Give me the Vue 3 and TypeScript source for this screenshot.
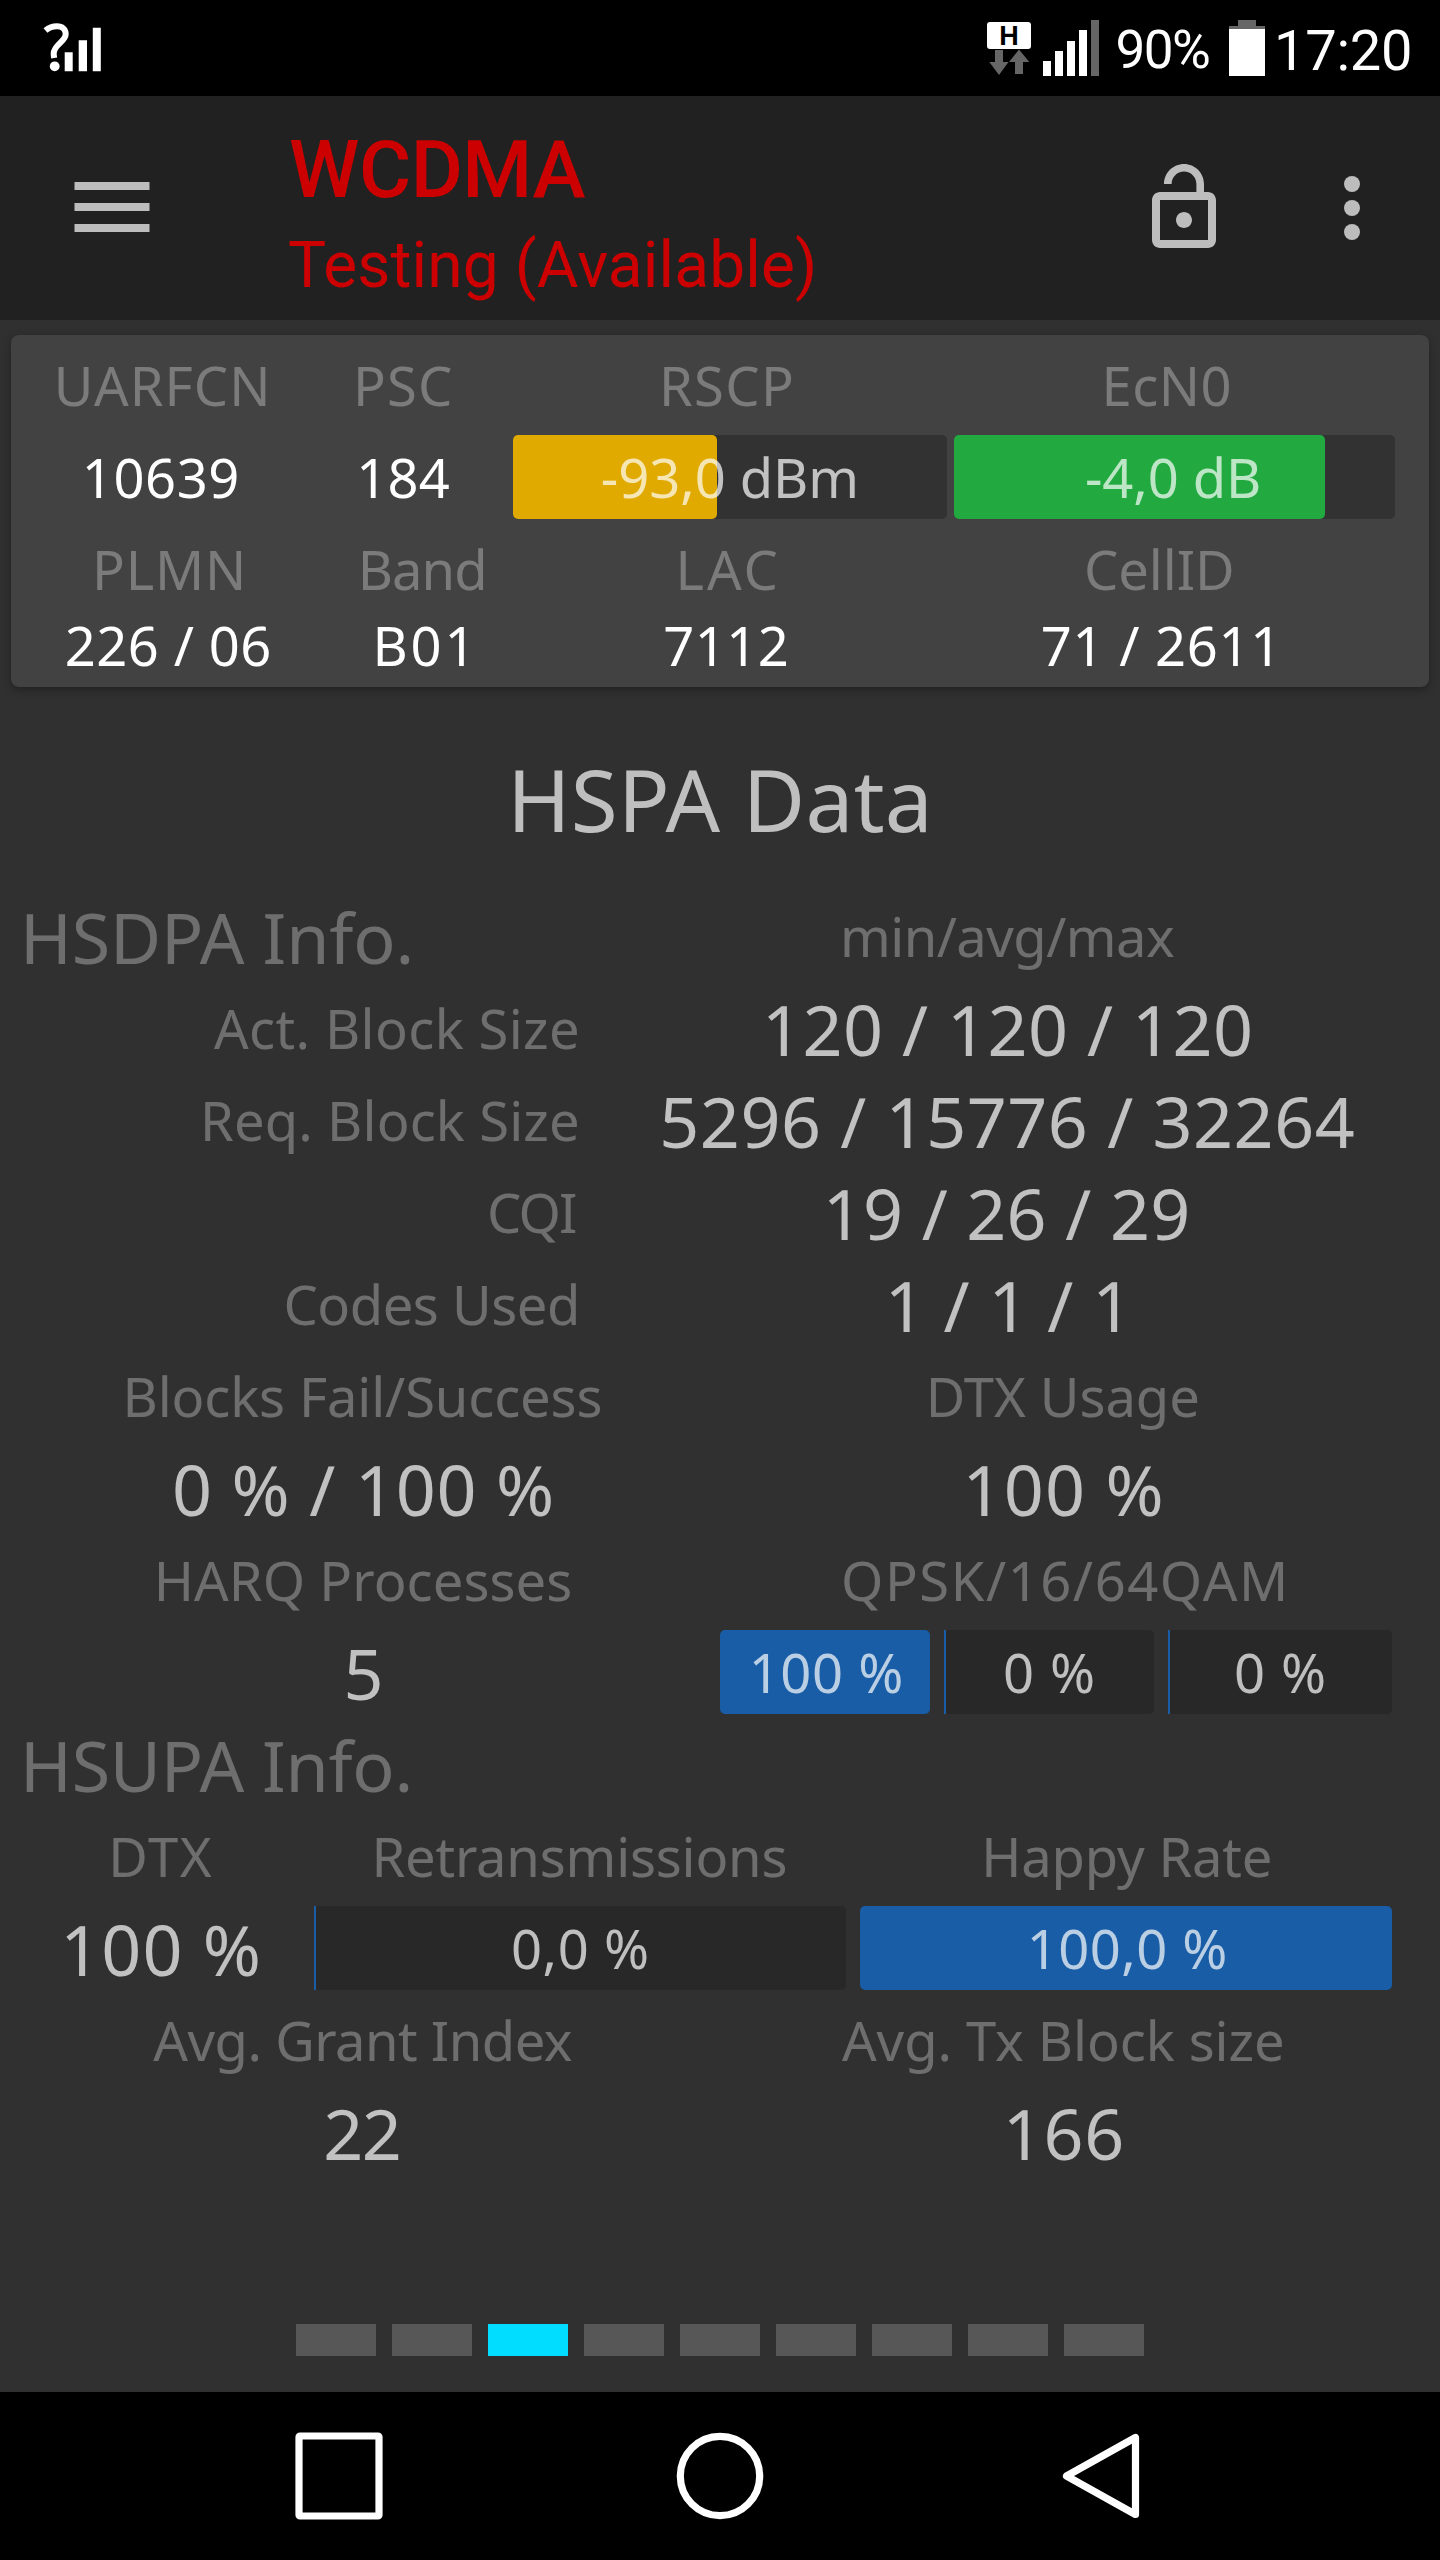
<script setup lang="ts">
import type { Directive } from 'vue'

interface Cell {
  text: string
  w: number
  ink: number
  kind?: 'label' | 'value' | 'big' | 'white'
  bar?: 'yellow' | 'green' | 'blue'
  fill?: number
  gap?: number
  dx?: number
  align?: 'start' | 'end'
  edge?: number
}

// Tracks the text out to the given ink width and trims the side bearings,
// so that each cell centres the visible glyphs.
const vFit: Directive<HTMLElement, number> = {
  mounted(el, { value }) {
    const ctx = document.createElement('canvas').getContext('2d')
    const text = el.textContent ?? ''
    if (!ctx || !text) return
    const s = getComputedStyle(el)
    ctx.font = `${s.fontWeight} ${s.fontSize} ${s.fontFamily}`
    const m = ctx.measureText(text)
    const ink = m.actualBoundingBoxLeft + m.actualBoundingBoxRight
    const spacing = text.length > 1 ? (value - ink) / (text.length - 1) : 0
    el.style.letterSpacing = `${spacing}px`
    el.style.marginLeft = `${m.actualBoundingBoxLeft}px`
    el.style.marginRight = `${m.actualBoundingBoxRight - m.width - spacing}px`
  },
}

function cellStyle(c: Cell) {
  const dx = c.dx ?? 0
  return {
    width: `${c.w}px`,
    marginLeft: `${c.gap ?? 0}px`,
    paddingLeft: `${c.align === 'start' ? c.edge : Math.max(0, dx * 2)}px`,
    paddingRight: `${c.align === 'end' ? c.edge : Math.max(0, -dx * 2)}px`,
    justifyContent: c.align ? `flex-${c.align}` : 'center',
  }
}

const cardRows: { h: number; pad: number; cells: Cell[] }[] = [
  { h: 99, pad: 12, cells: [
    { text: 'UARFCN', w: 277, ink: 207.5 },
    { text: 'PSC', w: 209, ink: 93 },
    { text: 'RSCP', w: 438, ink: 128 },
    { text: 'EcN0', w: 442, ink: 123 },
  ] },
  { h: 86, pad: 12, cells: [
    { text: '10639', w: 277, ink: 151.5, kind: 'white' },
    { text: '184', w: 209, ink: 88.5, kind: 'white' },
    { text: '-93,0 dBm', w: 434, ink: 252.5, bar: 'yellow', fill: 204, gap: 4, dx: -1 },
    { text: '-4,0 dB', w: 441, ink: 172, bar: 'green', fill: 371, gap: 7, dx: -1.5 },
  ] },
  { h: 97, pad: 0, cells: [
    { text: 'PLMN', w: 316, ink: 144 },
    { text: 'Band', w: 192, ink: 120.5 },
    { text: 'LAC', w: 419, ink: 96 },
    { text: 'CellID', w: 443, ink: 145 },
  ] },
  { h: 55, pad: 0, cells: [
    { text: '226 / 06', w: 314, ink: 202.5, kind: 'white' },
    { text: 'B01', w: 192, ink: 87, kind: 'white' },
    { text: '7112', w: 418, ink: 121.5, kind: 'white' },
    { text: '71 / 2611', w: 443, ink: 227.5, kind: 'white' },
  ] },
]

const dataRows: Cell[][] = [
  [
    { text: 'HSDPA Info.', w: 600, ink: 383.5, kind: 'big', align: 'start', edge: 26 },
    { text: 'min/avg/max', w: 818, ink: 330 },
  ],
  [
    { text: 'Act. Block Size', w: 600, ink: 363, align: 'end', edge: 23 },
    { text: '120 / 120 / 120', w: 818, ink: 482, kind: 'value' },
  ],
  [
    { text: 'Req. Block Size', w: 600, ink: 372, align: 'end', edge: 23 },
    { text: '5296 / 15776 / 32264', w: 817, ink: 690.5, kind: 'value' },
  ],
  [
    { text: 'CQI', w: 600, ink: 86, align: 'end', edge: 24 },
    { text: '19 / 26 / 29', w: 816, ink: 358.5, kind: 'value' },
  ],
  [
    { text: 'Codes Used', w: 600, ink: 289.5, align: 'end', edge: 24 },
    { text: '1 / 1 / 1', w: 808, ink: 226.5, kind: 'value' },
  ],
  [
    { text: 'Blocks Fail/Success', w: 728, ink: 473 },
    { text: 'DTX Usage', w: 672, ink: 266.5 },
  ],
  [
    { text: '0 % / 100 %', w: 726, ink: 376, kind: 'value' },
    { text: '100 %', w: 677, ink: 192, kind: 'value' },
  ],
  [
    { text: 'HARQ Processes', w: 729, ink: 411.5 },
    { text: 'QPSK/16/64QAM', w: 669, ink: 439 },
  ],
  [
    { text: '5', w: 720, ink: 31, kind: 'value', dx: 4 },
    { text: '100 %', w: 210, ink: 148.5, bar: 'blue', fill: 210, dx: 2 },
    { text: '0 %', w: 210, ink: 88, bar: 'blue', fill: 2, gap: 14 },
    { text: '0 %', w: 224, ink: 88, bar: 'blue', fill: 2, gap: 14 },
  ],
  [{ text: 'HSUPA Info.', w: 600, ink: 382.5, kind: 'big', align: 'start', edge: 26 }],
  [
    { text: 'DTX', w: 325, ink: 98.5 },
    { text: 'Retransmissions', w: 512, ink: 409 },
    { text: 'Happy Rate', w: 582, ink: 283.5 },
  ],
  [
    { text: '100 %', w: 314, ink: 191.5, kind: 'value', dx: 5 },
    { text: '0,0 %', w: 532, ink: 134, bar: 'blue', fill: 2 },
    { text: '100,0 %', w: 532, ink: 194.5, bar: 'blue', fill: 532, gap: 14, dx: 2 },
  ],
  [
    { text: 'Avg. Grant Index', w: 725, ink: 418.5 },
    { text: 'Avg. Tx Block size', w: 674, ink: 440 },
  ],
  [
    { text: '22', w: 725, ink: 72.5, kind: 'value' },
    { text: '166', w: 680, ink: 112.5, kind: 'value' },
  ],
]

const pages = 9
const activePage = 3
</script>

<template>
  <div class="screen">
    <header class="status">
      <svg class="unknown" width="60" height="52" viewBox="42 22 60 52">
        <path d="M45.5 30.5C49 27.5 53 26.3 57 26.3c5.300 0 8.700 3 8.700 7.700 0 8-12 10.500-12 19.500 0 1.500.2 3 .5 4.500" fill="none" stroke="#fff" stroke-width="6" />
        <circle cx="54.700" cy="66.300" r="4.900" fill="#fff" />
        <path d="M64.700 52.300h8V71.300h-8zM78.700 40.300h8.300V71.300h-8.300zM92.800 27.700h8V71.300h-8z" fill="#fff" />
      </svg>
      <div class="status-right">
        <svg width="112" height="56" viewBox="987 20 112 56">
          <rect x="987" y="22" width="44" height="27" rx="3" fill="#fff" />
          <text x="1009" y="45" class="net">H</text>
          <path d="M995 50h8v12h5.500L999 75l-9.700-13H995zM1019 49.500l10.300 12.500H1023v12h-8V62h-6z" fill="#666" />
          <path d="M1043 61h8v15h-8zM1055 51h8v25h-8zM1067 41h8v35h-8zM1079 30h8v46h-8z" fill="#fff" />
          <path d="M1091 20h8v56h-8z" fill="#666" />
        </svg>
        <span class="percent"><span v-fit="91.5">90%</span></span>
        <svg class="battery" width="36" height="56" viewBox="0 0 36 56">
          <path d="M9 0h18v6h9v3H0V6h9z" fill="#666" />
          <path d="M0 9h36v47H0z" fill="#fff" />
        </svg>
        <span class="clock"><span v-fit="132">17:20</span></span>
      </div>
    </header>

    <div class="appbar">
      <svg class="menu" width="76" height="50" viewBox="0 0 76 50">
        <path d="M.5 0h75v8H.5zM.5 21h75v8H.5zM.5 42h75v8H.5z" fill="#bdbdbd" />
      </svg>
      <div class="titles">
        <div class="title"><span v-fit="295.5">WCDMA</span></div>
        <div class="subtitle"><span v-fit="524">Testing (Available)</span></div>
      </div>
      <svg class="lock" width="96" height="96" viewBox="0 0 24 24">
        <path fill="#bdbdbd" d="M12 17c1.100 0 2-.9 2-2s-.9-2-2-2-2 .9-2 2 .9 2 2 2zm6-9h-1V6c0-2.760-2.240-5-5-5S7 3.240 7 6h1.900c0-1.710 1.390-3.100 3.100-3.100 1.710 0 3.100 1.390 3.100 3.100v2H6c-1.100 0-2 .9-2 2v10c0 1.100.9 2 2 2h12c1.100 0 2-.9 2-2V10c0-1.100-.9-2-2-2zm0 12H6V10h12v10z" />
      </svg>
      <svg class="more" width="16" height="64" viewBox="0 0 16 64">
        <g fill="#bdbdbd"><circle cx="8" cy="8" r="8" /><circle cx="8" cy="32" r="8" /><circle cx="8" cy="56" r="8" /></g>
      </svg>
    </div>

    <section class="card">
      <div v-for="(row, r) in cardRows" :key="r" class="row" :style="{ height: row.h + 'px', paddingLeft: row.pad + 'px' }">
        <div v-for="(c, i) in row.cells" :key="i" class="cell" :class="[c.bar ? 'bar' : c.kind ?? 'label', c.bar]" :style="cellStyle(c)">
          <i v-if="c.bar" class="fill" :style="{ width: c.fill + 'px' }"></i>
          <span v-fit="c.ink" class="txt">{{ c.text }}</span>
        </div>
      </div>
    </section>

    <h1 class="heading"><span v-fit="411.5">HSPA Data</span></h1>

    <section class="data">
      <div v-for="(row, r) in dataRows" :key="r" class="row">
        <div v-for="(c, i) in row" :key="i" class="cell" :class="[c.bar ? 'bar' : c.kind ?? 'label', c.bar]" :style="cellStyle(c)">
          <i v-if="c.bar" class="fill" :class="{ thin: c.fill === 2 }" :style="{ width: c.fill + 'px' }"></i>
          <span v-fit="c.ink" class="txt">{{ c.text }}</span>
        </div>
      </div>
    </section>

    <div class="pager">
      <i v-for="n in pages" :key="n" :class="{ active: n === activePage }"></i>
    </div>

    <nav class="nav">
      <svg width="88" height="88" viewBox="0 0 88 88"><rect x="4" y="4" width="80" height="80" rx="1" /></svg>
      <svg width="88" height="88" viewBox="0 0 88 88"><circle cx="44" cy="44" r="39.700" /></svg>
      <svg width="88" height="88" viewBox="0 0 88 88"><path d="M79.500 5.500v77L10.500 44z" stroke-linejoin="round" /></svg>
    </nav>
  </div>
</template>

<style>
body {
  background: #303030;
}
</style>

<style scoped>
.screen {
  width: 1440px;
  height: 2560px;
  display: flex;
  flex-direction: column;
  background: #303030;
  overflow: hidden;
  font-family: 'Noto Sans', sans-serif;
  white-space: pre;
}
svg {
  display: block;
  flex: none;
}
.status {
  flex: none;
  height: 96px;
  background: #000;
  color: #fff;
  font-family: Roboto, sans-serif;
  display: flex;
  justify-content: space-between;
  padding: 0 30px 0 42px;
}
.unknown {
  margin-top: 22px;
}
.status-right {
  display: flex;
  align-items: flex-start;
  padding-top: 20px;
}
.net {
  font: bold 27px 'Liberation Sans', sans-serif;
  text-anchor: middle;
}
.percent,
.clock {
  display: flex;
  line-height: 60px;
}
.percent {
  font-size: 53px;
  margin-left: 18px;
}
.battery {
  margin: 0 13px 0 20px;
}
.clock {
  font-size: 56px;
  margin-top: 1px;
}
.appbar {
  flex: none;
  height: 224px;
  background: #212121;
  display: flex;
  align-items: flex-start;
  font-family: Roboto, sans-serif;
  color: #c00;
}
.menu {
  margin: 86px 0 0 74px;
}
.titles {
  width: 846px;
  margin-left: 140px;
  padding-top: 27px;
}
.title,
.subtitle {
  display: flex;
}
.title {
  font-size: 80px;
  font-weight: 500;
  line-height: 94px;
}
.subtitle {
  font-size: 64px;
  line-height: 90px;
  margin: 4px 0 0 -1px;
}
.lock {
  margin-top: 64px;
}
.more {
  margin: 80px 0 0 112px;
}
.card {
  flex: none;
  width: 1418px;
  height: 352px;
  margin: 15px 0 0 11px;
  background: #424242;
  border-radius: 8px;
  box-shadow: 0 3px 8px rgba(0, 0, 0, 0.3);
}
.row {
  display: flex;
  align-items: center;
  box-sizing: border-box;
  height: 92px;
}
.cell {
  flex: none;
  box-sizing: border-box;
  display: flex;
  align-items: center;
  font-size: 54.3px;
  line-height: 80px;
}
.label,
.big {
  color: rgba(255, 255, 255, 0.3);
}
.value,
.bar {
  color: rgba(255, 255, 255, 0.7);
}
.white {
  color: #fff;
}
.value,
.big {
  font-size: 70px;
  padding-top: 1px;
}
.bar {
  position: relative;
  height: 84px;
  border-radius: 5px;
  background: #282828;
}
.card .bar {
  background: #323232;
}
.fill {
  position: absolute;
  left: 0;
  top: 0;
  height: 100%;
  border-radius: 5px;
  background: #185da6;
}
.fill.thin {
  border-radius: 0;
}
.yellow .fill {
  background: #e0aa00;
}
.green .fill {
  background: #22aa40;
}
.bar .txt {
  position: relative;
}
.heading {
  flex: none;
  height: 181px;
  margin: 21px 0 0;
  padding-left: 2px;
  display: flex;
  align-items: center;
  justify-content: center;
  font-size: 85.5px;
  font-weight: 400;
  color: #bfbfbf;
}
.data {
  flex: none;
  margin-top: 1px;
}
.pager {
  flex: none;
  display: flex;
  justify-content: center;
  gap: 16px;
  margin-top: 146px;
}
.pager i {
  width: 80px;
  height: 32px;
  background: #575757;
}
.pager i.active {
  background: #00ddff;
}
.nav {
  flex: none;
  height: 168px;
  margin-top: 36px;
  box-sizing: border-box;
  padding: 0 296px 0 295px;
  background: #000;
  display: flex;
  justify-content: space-between;
  align-items: center;
}
.nav svg {
  fill: none;
  stroke: #fff;
  stroke-width: 7.2;
}
</style>
